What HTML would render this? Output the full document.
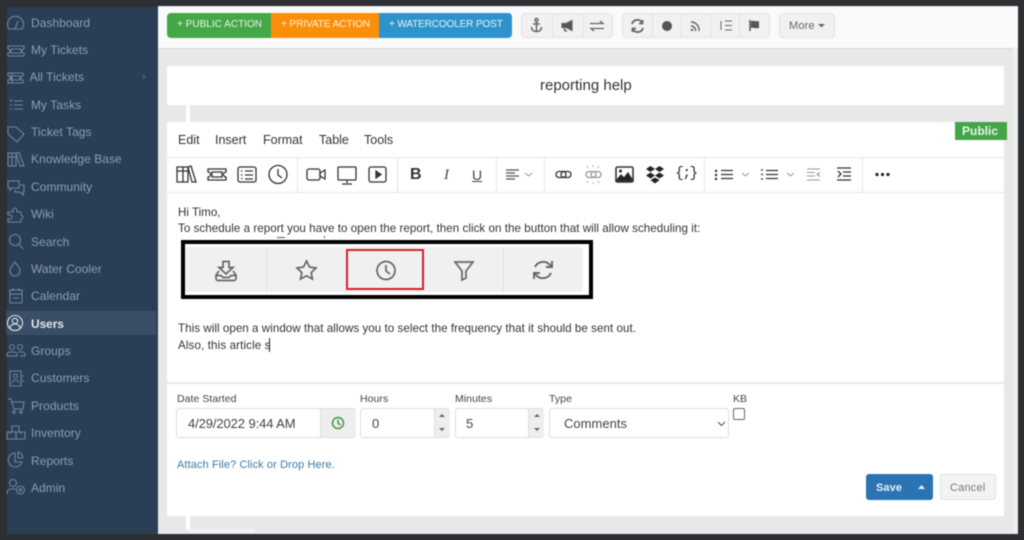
<!DOCTYPE html>
<html><head><meta charset="utf-8"><style>
html,body{margin:0;padding:0;width:1024px;height:540px;overflow:hidden;background:#2e2f33;font-family:"Liberation Sans",sans-serif}
#w{position:absolute;left:0;top:0;width:1024px;height:540px;filter:blur(.45px);overflow:hidden}
.a{position:absolute}
.t{position:absolute;white-space:nowrap}
.s{position:absolute;left:31px;font-size:12px;line-height:14px;color:#8c9db0;letter-spacing:.05px;white-space:nowrap}
svg{position:absolute;overflow:visible;fill:none}
.si{stroke:#6f859c;stroke-width:1.1}
.ti{stroke:#333;stroke-width:1.3}
.bi{stroke:#666;stroke-width:1.5}
.box{position:absolute;box-sizing:border-box;background:#fff;border:1px solid #ddd;border-radius:3px}
.grp{position:absolute;box-sizing:border-box;top:13px;height:25px;background:#f1f1f1;border:1px solid #e3e3e3;border-radius:4px}
.v{position:absolute;top:13px;width:1px;height:25px;background:#e2e2e2}
.sep{position:absolute;top:157px;width:1px;height:35px;background:#e6e6e6}
.lb{position:absolute;font-size:10.5px;color:#444;white-space:nowrap;letter-spacing:.05px}
.b{font-size:11.6px;line-height:14px;color:#333}
</style></head><body><div id="w">
<div class="a" style="left:7px;top:7px;width:151px;height:527px;background:#2a3f56"></div>
<div class="a" style="left:6px;top:311px;width:150px;height:24px;background:#3a4e66"></div>
<div class="a" style="left:158px;top:6px;width:860px;height:528px;background:#e8e8e8"></div>
<div class="a" style="left:158px;top:7px;width:860px;height:41px;background:#fafafa"></div>
<div class="a" style="left:158px;top:48px;width:855px;height:1px;background:#d8d8d8"></div>
<div class="a" style="left:1013px;top:48px;width:5px;height:486px;background:#efefef"></div>
<div class="a" style="left:167px;top:66px;width:837px;height:39px;background:#fff"></div>
<div class="a" style="left:186px;top:105px;width:4px;height:17px;background:#fff"></div>
<div class="a" style="left:167px;top:122px;width:837px;height:394px;background:#fff"></div>
<div class="a" style="left:186px;top:516px;width:4px;height:14px;background:#fff"></div>
<div class="a" style="left:190px;top:529px;width:65px;height:4px;background:#f2f2f2"></div>

<div class="s" style="top:16px">Dashboard</div>
<div class="s" style="top:43px">My Tickets</div>
<div class="s" style="top:70px;left:29.500px">All Tickets</div>
<div class="s" style="top:98px">My Tasks</div>
<div class="s" style="top:125px">Ticket Tags</div>
<div class="s" style="top:152px">Knowledge Base</div>
<div class="s" style="top:180px">Community</div>
<div class="s" style="top:207px">Wiki</div>
<div class="s" style="top:234.500px">Search</div>
<div class="s" style="top:262px">Water Cooler</div>
<div class="s" style="top:289px">Calendar</div>
<div class="s" style="top:316.500px;color:#dfe6ee;font-weight:bold;letter-spacing:-.1px">Users</div>
<div class="s" style="top:344px">Groups</div>
<div class="s" style="top:371px">Customers</div>
<div class="s" style="top:398.500px">Products</div>
<div class="s" style="top:426px">Inventory</div>
<div class="s" style="top:453.500px">Reports</div>
<div class="s" style="top:480.500px">Admin</div>
<div class="s" style="top:70px;left:142px;font-size:11px;color:#5f7489">›</div>

<svg class="si" style="left:0;top:0" width="30" height="540" viewBox="0 0 30 540">
<path d="M9 29a8 8 0 1 1 13 0zM15 29l3-8M12 20h.1M15 18h.1"/>
<path d="M8 46h16v3a2 2 0 0 0 0 4v3H8v-3a2 2 0 0 0 0-4zM11 49h10v4H11z"/>
<path d="M8 73h15v3a2 2 0 0 0 0 4v3H8v-3a2 2 0 0 0 0-4zM11 76h9v4h-9zM12 73v10"/>
<path d="M14 101h9M14 105h9M14 109h9M10 100l1 1 1-2M10 105h2M10 109h2"/>
<path d="M8 127h8l8 7-7 8-9-8zM11 130h.1"/>
<path d="M8 153h4v13H8zM12 153h4v13h-4zM16 153l3-.5 5 13.500h-4zM8 157h8"/>
<path d="M8 181h11v7h-7l-2 2v-2H8zM20 185h4v7h-1v3l-3-3h-5v-2"/>
<path d="M8 212h5v-2a2 2 0 1 1 4 0v2h4v3a2 2 0 1 1 0 4v3H8v-3h2a2 2 0 0 0 0-4H8z"/>
<circle cx="15" cy="240" r="5.500"/><path d="M19 244l4 5"/>
<path d="M15 262c3 4 5 6 5 9a5 5 0 0 1-10 0c0-3 2-5 5-9z"/>
<path d="M10 290h12v13H10zM10 294h12M13 288v3M19 288v3M13 298h6"/>
<circle cx="12" cy="347" r="2.500"/><circle cx="20" cy="347" r="2.500"/><path d="M7 356v-2a3 3 0 0 1 3-2h4a3 3 0 0 1 3 2v2zM18 352h4a3 3 0 0 1 3 2v2h-5"/>
<path d="M10 371h11v15H10zM23 375v2M23 380v2"/><circle cx="15.500" cy="376" r="2"/><path d="M12.500 383a3 3 0 0 1 6 0"/>
<path d="M8 399h3l3 10h9l1-7H12"/><circle cx="14" cy="412" r="1.300"/><circle cx="21" cy="412" r="1.300"/>
<path d="M12 426h7v6h-7zM7 432h9v7H7zM16 432h9v7h-9zM10 432v2M21 432v2"/>
<path d="M15 453a7 7 0 1 0 7 9h-7zM18 452a6 6 0 0 1 5 6h-5z"/>
<path d="M7 494v-2a4 4 0 0 1 4-3h5"/><circle cx="13" cy="483" r="3.500"/><circle cx="20.500" cy="490" r="4"/><circle cx="20.500" cy="490" r="1.300"/>
<circle cx="15" cy="323" r="7.500" stroke="#dfe6ee"/><circle cx="15" cy="321" r="2.700" stroke="#dfe6ee"/><path d="M10 328a5 4 0 0 1 10 0" stroke="#dfe6ee"/>
</svg>

<div class="a" style="left:167px;top:13px;width:104px;height:25px;background:#45a848;border-radius:4px 0 0 4px"></div>
<div class="a" style="left:271px;top:13px;width:109px;height:25px;background:#fc8f0a"></div>
<div class="a" style="left:379px;top:13px;width:133px;height:25px;background:#2f93cb;border-radius:0 4px 4px 0"></div>
<div class="t" style="left:177px;top:19px;font-size:10px;line-height:12px;color:#e8f5e8;letter-spacing:.02px">+ PUBLIC ACTION</div>
<div class="t" style="left:281px;top:19px;font-size:10px;line-height:12px;color:#fff2dd;letter-spacing:-.06px">+ PRIVATE ACTION</div>
<div class="t" style="left:389px;top:19px;font-size:10px;line-height:12px;color:#e8f4fb;letter-spacing:-.12px">+ WATERCOOLER POST</div>

<div class="grp" style="left:521px;width:92px"></div><div class="v" style="left:552px"></div><div class="v" style="left:583px"></div>
<div class="grp" style="left:622px;width:148px"></div><div class="v" style="left:652px"></div><div class="v" style="left:681px"></div><div class="v" style="left:710px"></div><div class="v" style="left:739px"></div>
<div class="grp" style="left:779px;width:56px"></div>
<div class="t" style="left:789px;top:19.500px;font-size:11px;line-height:13px;color:#666;letter-spacing:.2px">More</div>
<svg style="left:818px;top:24px" width="8" height="4"><path d="M0 0h7L3.500 3.500z" fill="#666"/></svg>
<svg class="bi" style="left:0;top:0" width="800" height="50">
<circle cx="536.500" cy="20" r="1.500"/><path d="M536.500 22v10M533 24h7M531.500 27c0 3 2 4.500 5 4.500s5-1.500 5-4.500"/>
<path d="M562 23.500h4l6-3v10l-6-3h-4zM564 28l1 3h2" fill="#555" stroke-width="1.200"/>
<path d="M590 23.500h13l-3-2.500M604 28.500h-13l3 2.500" stroke-width="1.300"/>
<path d="M632 24a5.500 5.500 0 0 1 10-1.500M643 28a5.500 5.500 0 0 1-10 1.500M642.500 20v3.500H639M632.500 32v-3.500H636" stroke-width="1.800"/>
<circle cx="667" cy="26" r="5" fill="#555" stroke="none"/>
<path d="M691 22a8 8 0 0 1 8 9M691 26a4.500 4.500 0 0 1 4.500 5" stroke-width="1.400"/><circle cx="692" cy="30" r="1.200" fill="#666" stroke="none"/>
<path d="M721 21v9M725 21h7M725 25.500h7M725 30h7" stroke-width="1"/>
<path d="M750 20v11" stroke="#555"/><path d="M751 21c3-1 4 1 8 0v7c-4 1-5-1-8 0z" fill="#555" stroke="none"/>
</svg>

<div class="t" style="left:540px;top:77px;font-size:15px;line-height:17px;color:#333">reporting help</div>
<div class="a" style="left:955px;top:122px;width:52px;height:18px;background:#43a548"></div>
<div class="t" style="left:962px;top:125px;font-size:12px;line-height:13px;font-weight:bold;color:#e8f5e8">Public</div>

<div class="t" style="left:178px;top:133px;font-size:12.500px;line-height:14px;color:#333">Edit</div>
<div class="t" style="left:215px;top:133px;font-size:12.500px;line-height:14px;color:#333">Insert</div>
<div class="t" style="left:263px;top:133px;font-size:12.500px;line-height:14px;color:#333">Format</div>
<div class="t" style="left:319px;top:133px;font-size:12.500px;line-height:14px;color:#333">Table</div>
<div class="t" style="left:364px;top:133px;font-size:12.500px;line-height:14px;color:#333">Tools</div>

<div class="a" style="left:167px;top:156.500px;width:837px;height:1.500px;background:#e8e8e8"></div>
<div class="a" style="left:167px;top:191.500px;width:837px;height:1.500px;background:#e8e8e8"></div>
<div class="sep" style="left:297px"></div><div class="sep" style="left:397px"></div><div class="sep" style="left:496px"></div><div class="sep" style="left:544px"></div><div class="sep" style="left:704px"></div><div class="sep" style="left:862px"></div>

<svg class="ti" style="left:0;top:0" width="1024" height="200">
<path d="M177 167h6v15h-6zM183 167h5v15h-5zM188 167l3-1 5 16h-4zM177 171h11"/>
<path d="M208 169h18v3a2 2 0 0 0 0 5v3h-18v-3a2 2 0 0 0 0-5zM212 172h10v5h-10z"/>
<rect x="238" y="167" width="18" height="15" rx="2"/><path d="M245 171h8M245 175h8M245 179h8M241 171h1.500M241 175h1.500M241 178.500h1.500"/>
<circle cx="278" cy="174.500" r="9"/><path d="M278 169v6l4 3"/>
<rect x="307" y="169" width="13" height="11" rx="2"/><path d="M320 173l5-3v9l-5-3z"/>
<rect x="338" y="167" width="18" height="13" rx="1"/><path d="M347 180v3M342 184h10"/>
<rect x="369" y="167" width="17" height="15" rx="2"/><path d="M376 171l5 3.500-5 3.500z" fill="#333"/>
<path d="M506 170h13M506 173h9M506 176h13M506 179h9" stroke="#555" stroke-width="1.200"/>
<path d="M525 173l3.500 3 3.500-3" stroke="#999" stroke-width="1"/>
<rect x="556" y="171.500" width="10" height="6" rx="3"/><rect x="561" y="171.500" width="10" height="6" rx="3"/>
<path d="M593 167v-2M588 168l-1-2M598 168l1-2M593 182v2M588 181l-1 2M598 181l1 2" stroke="#aaa" stroke-width="1"/>
<rect x="586" y="171.500" width="10" height="6" rx="3" stroke="#999"/><rect x="591" y="171.500" width="10" height="6" rx="3" stroke="#999"/>
<rect x="616" y="167" width="17" height="15" rx="1.500" stroke-width="1.600"/><path d="M616 181l5-6 3 3 4-5 5 8z" fill="#222"/><circle cx="620.500" cy="171" r="1.500" fill="#222" stroke="none"/>
<path d="M650.500 166l-4.500 3 4.500 3 4.500-3zM659.500 166l-4.500 3 4.500 3 4.500-3zM650.500 172.500l-4.500 3 4.500 3 4.500-3zM659.500 172.500l-4.500 3 4.500 3 4.500-3zM650.500 180l4.500-2.500 4.500 2.500-4.500 3.500z" fill="#222" stroke="none"/>
<path d="M716 171h.1M716 175h.1M716 179h.1" stroke-width="2.400" stroke-linecap="round"/><path d="M721 170.500h12M721 174.500h12M721 178.500h12"/>
<path d="M742 173l3.500 3 3.500-3M787 173l3.500 3 3.500-3" stroke="#999" stroke-width="1"/>
<path d="M761 170h2M761 174.500h2M761 179h2"/><path d="M766 170.500h12M766 174.500h12M766 178.500h12"/>
<path d="M807 169h13M807 172.500h8M807 176h8M807 180h13M820 172.500l-3 2 3 2" stroke="#999" stroke-width="1.100"/>
<path d="M837 168h14M843 172h8M843 176h8M837 180h14M838 171l3 3-3 3"/>
<circle cx="877" cy="174.500" r="1.600" fill="#222" stroke="none"/><circle cx="882.500" cy="174.500" r="1.600" fill="#222" stroke="none"/><circle cx="888" cy="174.500" r="1.600" fill="#222" stroke="none"/>
</svg>
<div class="t" style="left:410px;top:166px;font-size:16px;line-height:17px;font-weight:bold;color:#333">B</div>
<div class="t" style="left:444px;top:167px;font-size:15px;line-height:16px;font-style:italic;color:#444;font-family:'Liberation Serif',serif">I</div>
<div class="t" style="left:472px;top:167px;font-size:14px;line-height:16px;color:#444;text-decoration:underline">U</div>
<div class="t" style="left:675px;top:166px;font-size:15px;line-height:16px;color:#333;font-family:'Liberation Mono',monospace;letter-spacing:-1.800px">{;}</div>

<div class="t b" style="left:178px;top:205.500px">Hi Timo,</div>
<div class="t b" style="left:178px;top:221.500px;letter-spacing:.04px">To schedule a report you have to open the report, then click on the button that will allow scheduling it:</div>
<div class="a" style="left:277px;top:237px;width:8px;height:1px;background:#555"></div>
<div class="a" style="left:324px;top:236px;width:1px;height:2px;background:#555"></div>

<div class="a" style="left:181px;top:240px;width:412px;height:59px;box-sizing:border-box;border:4px solid #000;background:#fff"></div>
<div class="a" style="left:185px;top:247px;width:398px;height:45px;background:#f0f0f0;border-radius:0 4px 4px 0"></div>
<div class="a" style="left:266px;top:247px;width:1px;height:45px;background:#e0e0e0"></div>
<div class="a" style="left:503px;top:247px;width:1px;height:45px;background:#e0e0e0"></div>
<div class="a" style="left:346px;top:249px;width:78px;height:41px;box-sizing:border-box;border:2px solid #d5202e"></div>
<svg style="left:0;top:0;stroke:#666;stroke-width:1.700" width="600" height="300">
<path d="M223 261.500h6v6h4l-7 6.500-7-6.500h4z"/>
<path d="M219 271l-3 4v3.500a2 2 0 0 0 2 2h16a2 2 0 0 0 2-2V275l-3-4M216 275.500h5l2 2h6l2-2h5"/>
<path d="M306.500 261l3 6 6.500 1-4.800 4.500 1.200 6.500-5.900-3.200-5.900 3.200 1.200-6.500-4.800-4.500 6.500-1z"/>
<circle cx="386" cy="270.500" r="9"/><path d="M386 265v6l4 3"/>
<path d="M455 262h18l-7 9v7l-4 2v-9z"/>
<path d="M535 267a9 9 0 0 1 15-2l2 2M552 261v6h-6M551 273a9 9 0 0 1-15 2l-2-2M534 279v-6h6" stroke-width="1.900"/>
</svg>

<div class="t b" style="left:178px;top:321.500px;letter-spacing:.04px">This will open a window that allows you to select the frequency that it should be sent out.</div>
<div class="t b" style="left:178px;top:338.500px;letter-spacing:.12px">Also, this article s</div>
<div class="a" style="left:269px;top:338px;width:1px;height:14px;background:#222"></div>

<div class="a" style="left:167px;top:382px;width:837px;height:1.500px;background:#e8e8e8"></div>

<div class="lb" style="left:177px;top:392.500px">Date Started</div>
<div class="lb" style="left:360px;top:392.500px">Hours</div>
<div class="lb" style="left:455px;top:392.500px">Minutes</div>
<div class="lb" style="left:549px;top:392.500px">Type</div>
<div class="lb" style="left:733px;top:392.500px">KB</div>

<div class="box" style="left:176px;top:408px;width:180px;height:30px"></div>
<div class="a" style="left:320px;top:409px;width:35px;height:28px;background:#eee;border-left:1px solid #ddd;border-radius:0 3px 3px 0"></div>
<div class="t" style="left:188px;top:416px;font-size:13px;line-height:15px;color:#444;letter-spacing:-.1px">4/29/2022 9:44 AM</div>
<svg style="left:331px;top:416px;stroke:#3f9a44;stroke-width:1.500" width="14" height="14"><circle cx="7" cy="7" r="5.500"/><path d="M7 3.500V7l2.500 2"/></svg>

<div class="box" style="left:360px;top:408px;width:90px;height:30px"></div>
<div class="a" style="left:434px;top:409px;width:15px;height:28px;background:#eee;border-left:1px solid #ddd"></div>
<div class="t" style="left:372px;top:416px;font-size:13px;line-height:15px;color:#444">0</div>
<div class="box" style="left:455px;top:408px;width:89px;height:30px"></div>
<div class="a" style="left:528px;top:409px;width:15px;height:28px;background:#eee;border-left:1px solid #ddd"></div>
<div class="t" style="left:466px;top:416px;font-size:13px;line-height:15px;color:#444">5</div>

<div class="box" style="left:549px;top:408px;width:180px;height:30px"></div>
<div class="t" style="left:564px;top:416px;font-size:13px;line-height:15px;color:#444;letter-spacing:.02px">Comments</div>
<div class="a" style="left:733px;top:408px;width:10px;height:10px;border:1px solid #666;border-radius:2px;background:#fff"></div>
<svg style="left:0;top:0" width="1024" height="540"><path d="M439 417l3-3 3 3zM439 428l3 3 3-3zM534 417l3-3 3 3zM534 428l3 3 3-3z" fill="#666"/><path d="M718 422l3.500 3.500 3.500-3.500" stroke="#555" stroke-width="1.100"/></svg>

<div class="t" style="left:177px;top:458.500px;font-size:11px;line-height:13px;color:#3a7aa8;letter-spacing:.1px">Attach File? Click or Drop Here.</div>

<div class="a" style="left:866px;top:474px;width:67px;height:26px;background:#2a74b4;border-radius:3px"></div>
<div class="t" style="left:876px;top:481.500px;font-size:11px;line-height:13px;color:#e6f0f8;font-weight:bold;letter-spacing:.1px">Save</div>
<svg style="left:918px;top:485px" width="8" height="4"><path d="M0 4h7L3.500 0z" fill="#e6f0f8"/></svg>
<div class="a" style="left:940px;top:474px;width:56px;height:26px;box-sizing:border-box;background:#f3f3f3;border:1px solid #e2e2e2;border-radius:3px"></div>
<div class="t" style="left:950px;top:481.500px;font-size:11px;line-height:13px;color:#777;letter-spacing:.2px">Cancel</div>
</div></body></html>
